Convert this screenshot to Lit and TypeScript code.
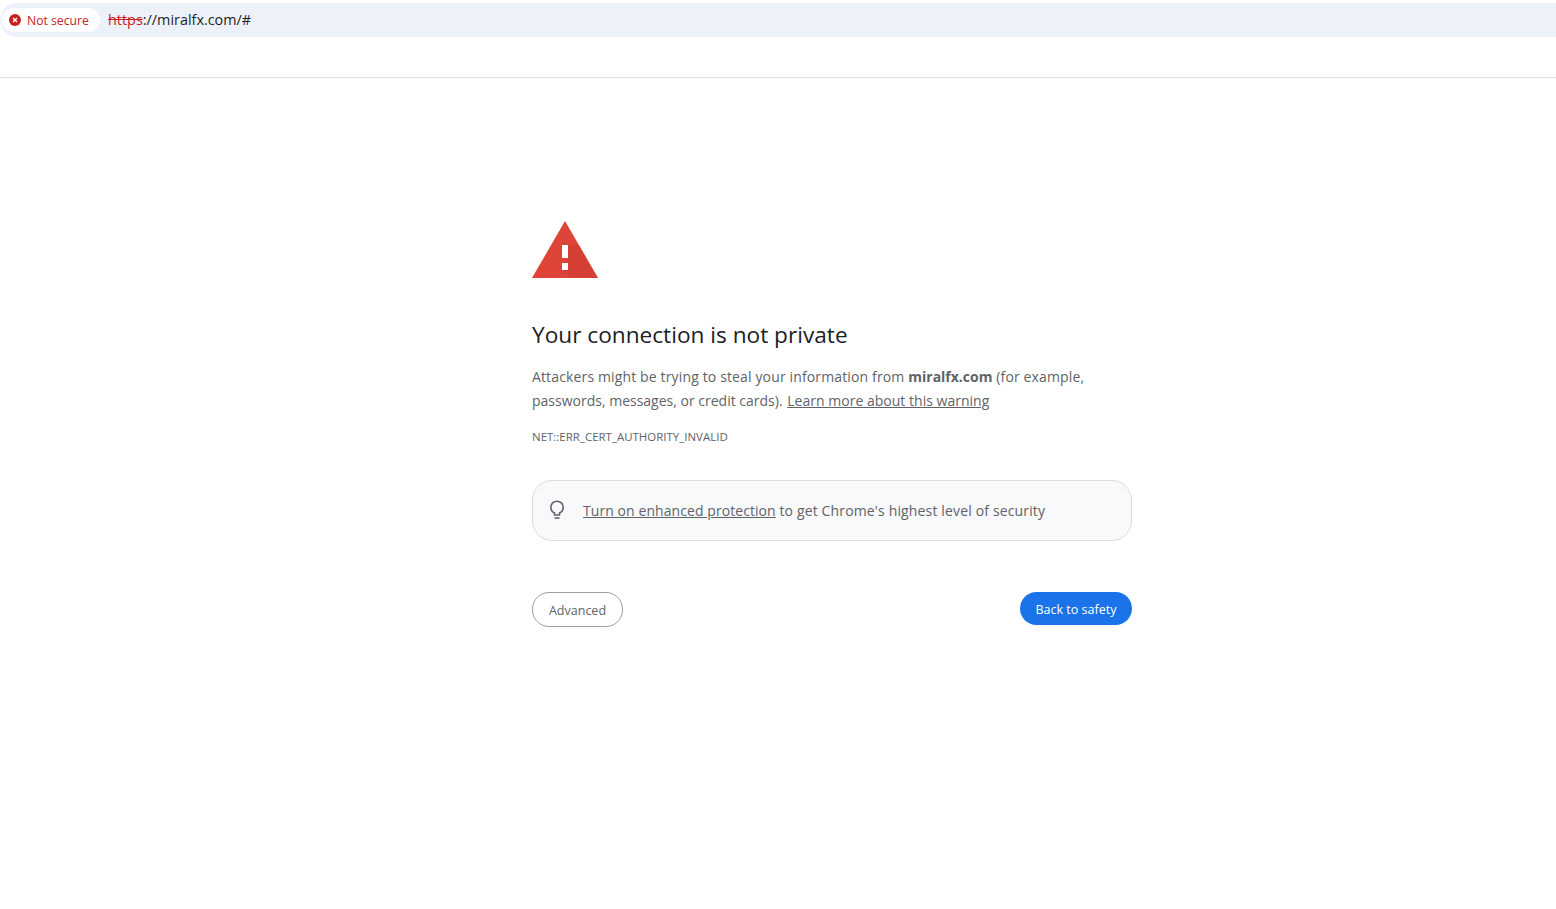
import { LitElement, html, css } from "lit";
import { customElement } from "lit/decorators.js";

@customElement("app-root")
export class AppRoot extends LitElement {
  static styles = css`
    :host { display: block; min-height: 909px; background: #fff; font-family: "Open Sans", "Noto Sans", sans-serif; color: #5f6368; }
    .chrome { height: 74px; border-bottom: 1px solid #e0e0e0; padding-top: 3px; }
    .omnibox { height: 34px; background: #edf2fa; border-radius: 17px 0 0 17px; display: flex; align-items: center; padding-left: 2px; }
    .chip { height: 24px; width: 98px; box-sizing: border-box; background: #fff; border-radius: 12px; display: flex; align-items: center; padding-left: 7px; gap: 6px; color: #c5221f; font-size: 12.2px; }
    .chip svg { display: block; flex: none; }
    .url { margin-left: 8px; font-size: 14.4px; color: #1f1f1f; margin-top: -1px; }
    .url s { color: #c5221f; }
    .page { width: 600px; margin-left: 532px; padding-top: 143px; }
    .icon { display: block; width: 66px; height: 57px; }
    h1 { margin: 42px 0 0; font-size: 22.65px; line-height: 30px; font-weight: 400; color: #202124; }
    .desc { margin: 15px 0 0; font-size: 14px; line-height: 24px; color: #5f6368; white-space: nowrap; }
    .desc b { font-weight: 700; color: #5f6368; letter-spacing: 0; }
    .wide { letter-spacing: 0.14px; }
    .desc a { letter-spacing: 0.02px; margin-left: 1px; }
    a { color: #5f6368; text-decoration: underline; }
    .code { margin-top: 16px; font-size: 11.48px; line-height: 16px; color: #5f6368; }
    .promo { margin-top: 35px; height: 61px; box-sizing: border-box; border: 1px solid #dadce0; border-radius: 20px; background: #f8f9fa; display: flex; align-items: center; padding-left: 14px; gap: 16px; font-size: 14px; }
    .promo svg { display: block; flex: none; margin-top: -2px; }
    .promo a { letter-spacing: 0.07px; }
    .promo .tail { letter-spacing: 0.15px; }
    .actions { margin-top: 51px; display: flex; justify-content: space-between; align-items: flex-start; }
    button { font-family: inherit; font-size: 12.5px; border-radius: 17px; padding: 1px 0 0; margin: 0; }
    .adv { width: 91px; height: 35px; background: #fff; border: 1px solid #9aa0a6; color: #5f6368; }
    .safe { width: 112px; height: 33px; background: #1a73e8; border: 0; color: #fff; }
  `;

  render() {
    return html`
      <div class="chrome">
        <div class="omnibox">
          <div class="chip">
            <svg width="12" height="12" viewBox="0 0 12 12">
              <circle cx="6" cy="6" r="6" fill="#c5221f"></circle>
              <path d="M4 4l4 4M8 4l-4 4" stroke="#fff" stroke-width="1.4" fill="none"></path>
            </svg>
            <span>Not secure</span>
          </div>
          <div class="url"><s>https</s>://miralfx.com/#</div>
        </div>
      </div>
      <main class="page">
        <svg class="icon" viewBox="0 0 66 57">
          <path d="M33 0L66 57H0Z" fill="#de4437"></path>
          <path d="M36 24L36 37L31 49L39 57H66L47 24Z" fill="#c93d31" opacity="0.5"></path>
          <rect x="30" y="24" width="6" height="13" fill="#fff"></rect>
          <rect x="30" y="42" width="6" height="7" fill="#fff"></rect>
        </svg>
        <h1>Your connection is not private</h1>
        <p class="desc"><span class="wide">Attackers might be trying to steal your information from <b>miralfx.com</b> (for example,</span><br>passwords, messages, or credit cards). <a href="#">Learn more about this warning</a></p>
        <div class="code">NET::ERR_CERT_AUTHORITY_INVALID</div>
        <div class="promo">
          <svg width="20" height="20" viewBox="0 0 20 20" fill="none" stroke="#5f6368" stroke-width="1.6">
            <path d="M7.5 15v-2C5.3 12 3.8 9.8 3.8 7.2 3.8 3.8 6.6 1.2 10 1.2s6.2 2.6 6.2 6c0 2.6-1.5 4.8-3.7 5.8v2Z"></path>
            <path d="M7.5 18h5"></path>
          </svg>
          <span><a href="#">Turn on enhanced protection</a> <span class="tail">to get Chrome's highest level of security</span></span>
        </div>
        <div class="actions">
          <button class="adv">Advanced</button>
          <button class="safe">Back to safety</button>
        </div>
      </main>
    `;
  }
}
